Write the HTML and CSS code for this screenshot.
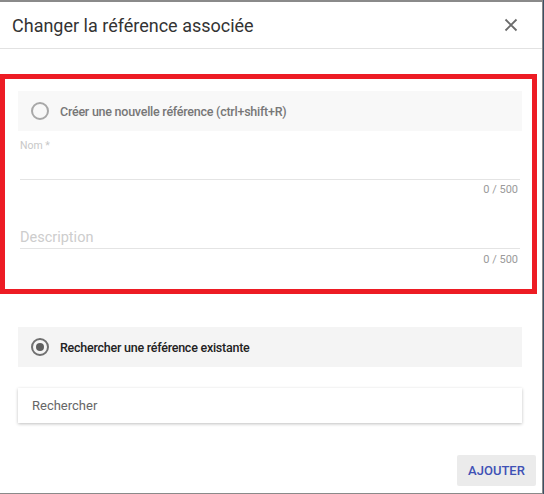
FILE: index.html
```html
<!DOCTYPE html>
<html lang="fr">
<head>
  <meta charset="UTF-8">
  <title>Changer la référence associée</title>
  <meta name="viewport" content="width=device-width, initial-scale=1.0">
  <link rel="stylesheet" href="styles.css">
</head>
<body>

<div class="dialog">
  <div class="dialog-header">
    <h1>Changer la référence associée</h1>
    <button class="close" aria-label="Fermer">
      <svg width="14" height="14" viewBox="0 0 14 14">
        <path d="M1.5 1.5 L12.5 12.5 M12.5 1.5 L1.5 12.5" stroke="#6b6b6b" stroke-width="1.8" fill="none"/>
      </svg>
    </button>
  </div>

  <div class="dialog-body">
    <div class="highlight">
      <div class="choice">
        <span class="radio"></span>
        <span class="choice-label">Créer une nouvelle référence (ctrl+shift+R)</span>
      </div>

      <div class="field field-nom">
        <label>Nom *</label>
        <div class="line"></div>
        <div class="counter">0 / 500</div>
      </div>

      <div class="field field-desc">
        <div class="line placeholder">Description</div>
        <div class="counter">0 / 500</div>
      </div>
    </div>

    <div class="choice choice-on">
      <span class="radio checked"></span>
      <span class="choice-label">Rechercher une référence existante</span>
    </div>

    <div class="search">Rechercher</div>
  </div>

  <div class="dialog-footer">
    <button class="add">AJOUTER</button>
  </div>
</div>

</body>
</html>
```

FILE: styles.css
```css
* { box-sizing: border-box; }

body {
  margin: 0;
  height: 494px;
  overflow: hidden;
  font-family: Roboto, 'Liberation Sans', Arial, sans-serif;
  background: linear-gradient(to right, #8a8a8a 543px, #3b4f63 543px);
}

.dialog {
  width: 542px;
  height: 491px;
  margin-top: 2px;
  background: #fff;
  display: flex;
  flex-direction: column;
}

.dialog-header {
  height: 47px;
  padding: 0 24px 0 12px;
  display: flex;
  justify-content: space-between;
  align-items: center;
  border-bottom: 1px solid #e2e2e2;
}

.dialog-header h1 {
  margin: 0;
  font-size: 18px;
  font-weight: 400;
  color: #333;
}

.close {
  border: none;
  background: none;
  padding: 0;
  width: 14px;
  height: 14px;
  display: flex;
}

.dialog-body {
  flex: 1;
  padding-top: 25px;
}

.highlight {
  width: 537px;
  height: 220px;
  border: 5px solid #ed1c24;
  padding: 12px 10px 0 13px;
}

.choice {
  height: 40px;
  background: #f8f8f8;
  display: flex;
  align-items: center;
  padding-left: 13px;
  gap: 11px;
}

.radio {
  width: 18px;
  height: 18px;
  border: 2px solid #a8a8a8;
  border-radius: 50%;
  display: flex;
  align-items: center;
  justify-content: center;
}

.radio.checked { border-color: #707070; }

.radio.checked::after {
  content: '';
  width: 8px;
  height: 8px;
  border-radius: 50%;
  background: #5e5e5e;
}

.choice-label {
  font-size: 12.5px;
  font-weight: 500;
  letter-spacing: -0.25px;
  color: #777;
}

.field { margin: 0 2px; }

.field label {
  display: block;
  margin-top: 8px;
  font-size: 10.5px;
  line-height: 14px;
  color: #c8c8c8;
}

.line {
  height: 27px;
  border-bottom: 1px solid #e4e4e4;
}

.counter {
  text-align: right;
  padding-right: 2px;
  margin-top: 3px;
  font-size: 11px;
  line-height: 14px;
  color: #9a9a9a;
}

.field-desc .line {
  margin-top: 27px;
  height: 25px;
  padding-top: 4px;
  line-height: 20px;
  font-size: 14.5px;
}

.field-desc .counter { margin-top: 4px; }

.placeholder { color: #cdcdcd; }

.choice-on {
  margin: 33px 20px 0 18px;
  background: #f4f4f4;
}

.choice-on .choice-label { color: #222; }

.search {
  margin: 21px 20px 0 18px;
  height: 35px;
  padding-left: 14px;
  display: flex;
  align-items: center;
  font-size: 13px;
  color: #666;
  box-shadow: 0 1px 3px rgba(0, 0, 0, 0.25);
}

.dialog-footer {
  display: flex;
  justify-content: flex-end;
  padding: 0 6px 7px 0;
}

.add {
  width: 79px;
  height: 31px;
  border: none;
  border-radius: 2px;
  background: #ebebeb;
  color: #3f51b5;
  font-family: Roboto, 'Liberation Sans', Arial, sans-serif;
  font-size: 13px;
  font-weight: 500;
  padding: 0;
}
```
